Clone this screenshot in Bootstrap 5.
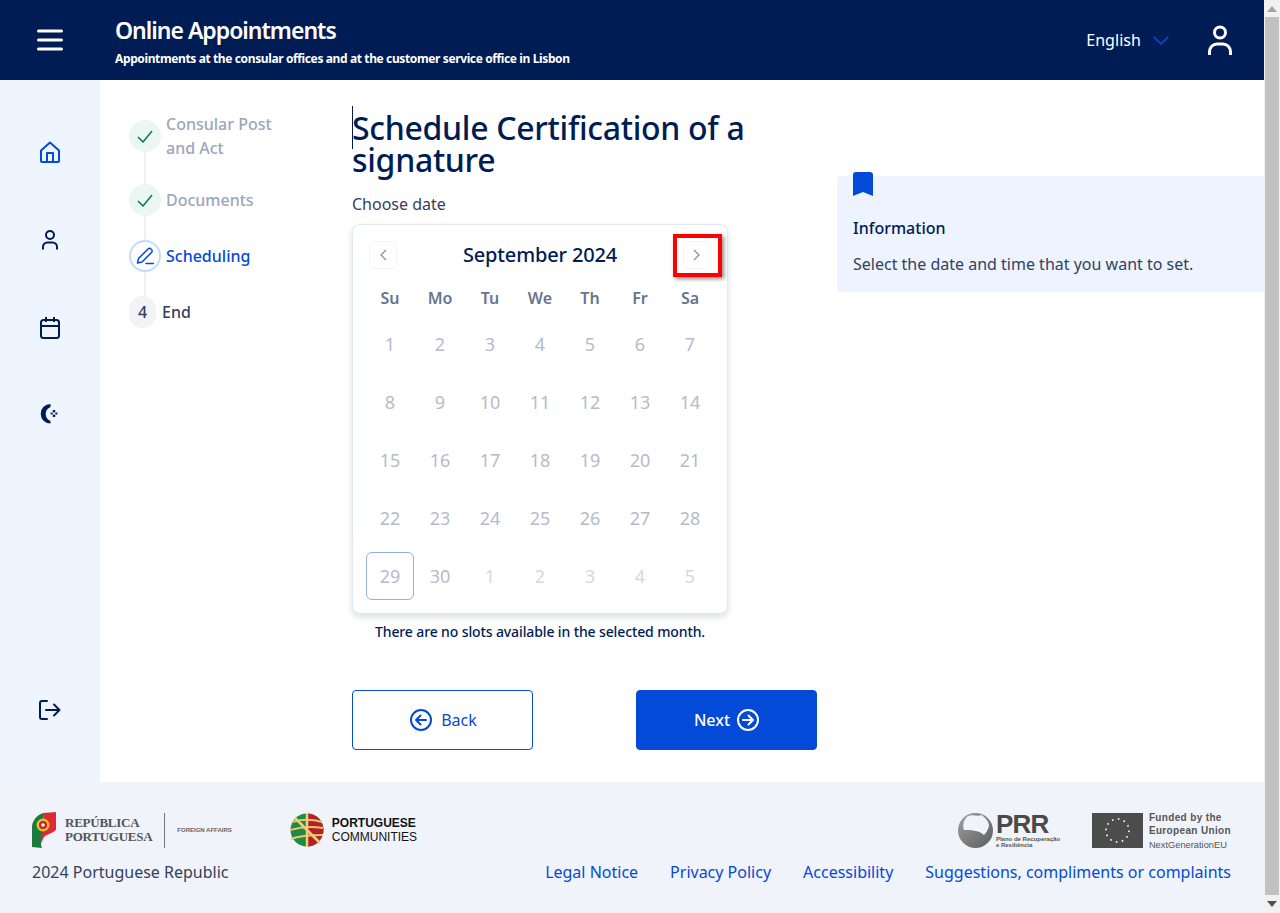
<!DOCTYPE html>
<html lang="en">
<head>
    <meta charset="UTF-8">
    <title>Online Appointments</title>
    <link rel="stylesheet" href="https://cdn.jsdelivr.net/npm/bootstrap@5.3.0/dist/css/bootstrap.min.css">
    <style>
        :root {
            --navy: #001c54;
            --blue: #034ad8;
        }

        html, body { height: 913px; overflow: hidden; }

        body {
            font-family: "Noto Sans", sans-serif;
            font-size: 16px;
            color: #33415c;
            background: #fff;
        }

        .page-col { width: 1264px; height: 913px; }

        /* fake browser scrollbar */
        .scroll-col { width: 16px; height: 913px; background: #f1f1f1; }
        .scroll-btn { height: 17px; }
        .scroll-thumb { margin: 0 1px; height: 878px; background: #c1c1c1; }

        /* header */
        .top-bar { height: 80px; background: var(--navy); color: #fff; }
        .burger { width: 115px; padding-left: 37px; }
        .bar-title { font-size: 23px; line-height: 32px; font-weight: 600; letter-spacing: -1px; }
        .bar-sub { font-size: 12px; line-height: 16px; font-weight: 700; margin-top: 5px; letter-spacing: -0.38px; }
        .lang-text { font-size: 16px; letter-spacing: 0.05px; }
        .lang-arrow { margin-left: 12px; }
        .bar-user { margin-left: 39px; margin-right: 32px; }

        /* body area */
        .mid-area { height: 702px; }
        .side-nav { width: 100px; background: #eff5ff; padding-top: 60px; }
        .side-link { height: 24px; margin-bottom: 64px; flex: none; }
        .side-out { margin-top: 206px; margin-bottom: 0; }

        /* stepper */
        .steps-col { width: 252px; padding-left: 29px; padding-top: 32px; }
        .step-list { position: relative; }
        .step-list::before {
            content: "";
            position: absolute;
            left: 15px;
            top: 8px;
            width: 2px;
            height: 190px;
            background: #eef1f6;
        }
        .step-row { display: flex; align-items: center; margin-bottom: 24px; position: relative; font-weight: 500; line-height: 24px; }
        .step-dot { width: 32px; height: 32px; border-radius: 50%; flex: none; display: flex; align-items: center; justify-content: center; margin-right: 5px; }
        .step-done .step-dot { background: #ebf8f2; }
        .step-done { color: #9ba6bc; }
        .step-now { color: var(--blue); }
        .step-now .step-dot { background: #fff; border: 2px solid #c4dafb; }
        .step-end { color: #33415c; }
        .step-end .step-dot { width: 27px; background: #f1f3f8; border-radius: 14px; font-weight: 500; color: #33415c; font-size: 16px; margin-right: 6px; }

        /* main column */
        .main-col { width: 465px; padding-top: 32px; position: relative; }
        .text-caret { position: absolute; left: 0; top: 26px; width: 1px; height: 43px; background: var(--navy); }
        .page-title { font-size: 32px; line-height: 32px; font-weight: 500; letter-spacing: -0.3px; color: var(--navy); margin: 0; }
        .date-label { margin-top: 16px; line-height: 24px; margin-bottom: 8px; color: #33415c; }

        .cal-box {
            width: 376px;
            height: 390px;
            border: 1px solid #e3e8f0;
            border-radius: 8px;
            box-shadow: 0 3px 6px rgba(40, 50, 80, 0.16);
            padding: 16px 12px 0 12px;
            position: relative;
            background: #fff;
        }
        .cal-head { height: 28px; padding: 0 4px; }
        .cal-nav { width: 28px; height: 28px; border: 1px solid #f4f5f8; border-radius: 5px; background: #fff; display: flex; align-items: center; justify-content: center; padding: 0; }
        .cal-month { font-size: 20px; line-height: 28px; font-weight: 500; letter-spacing: -0.15px; color: var(--navy); }
        .cal-grid { display: grid; grid-template-columns: repeat(7, 50px); }
        .cal-wd { height: 24px; line-height: 24px; margin-top: 17px; margin-bottom: 10px; text-align: center; font-weight: 600; color: #66758f; }
        .cal-day { height: 48px; margin-bottom: 10px; display: flex; align-items: center; justify-content: center; color: #b4bcc9; font-size: 18px; width: 48px; justify-self: center; }
        .cal-day.other { color: #d6d8dc; }
        .cal-day.today { border: 1px solid #8eb0ee; border-radius: 6px; }
        .red-mark {
            position: absolute;
            left: 320px;
            top: 9px;
            width: 49px;
            height: 43px;
            border: 4px solid #f00;
            box-shadow: 2px 2px 4px rgba(0, 0, 0, 0.45);
            pointer-events: none;
        }
        .no-slots { width: 376px; text-align: center; font-size: 14px; line-height: 20px; font-weight: 500; letter-spacing: -0.12px; color: var(--navy); margin-top: 8px; }

        .btn-row { margin-top: 48px; }
        .act-btn { width: 181px; height: 60px; border-radius: 4px; display: flex; align-items: center; justify-content: center; font-size: 16px; }
        .act-back { background: #fff; border: 1px solid var(--blue); color: var(--blue); gap: 9px; padding-left: 8px; }
        .act-next { background: var(--blue); border: 1px solid var(--blue); color: #fff; font-weight: 500; gap: 7px; }

        /* info box */
        .info-col { margin-left: 20px; width: 427px; padding-top: 96px; }
        .info-box { height: 116px; background: #edf4ff; border-radius: 4px 0 0 4px; padding: 0 16px; position: relative; }
        .info-mark { position: absolute; left: 16px; top: -4px; }
        .info-head { padding-top: 40px; line-height: 24px; font-weight: 500; color: var(--navy); }
        .info-text { margin-top: 12px; line-height: 24px; color: #33415c; }

        /* footer */
        .foot-area { height: 131px; background: #f0f3f9; padding: 30px 33px 0 32px; }
        .logo-row { height: 36px; }
        .rep-name { font-family: "Liberation Serif", serif; font-size: 13px; line-height: 14.5px; font-weight: 700; color: #555; letter-spacing: -0.25px; margin-left: 9px; }
        .rep-div { width: 1px; height: 35px; background: #777; margin: 0 12px; }
        .rep-dept { font-family: "Liberation Sans", sans-serif; font-size: 6px; font-weight: 700; color: #666; white-space: nowrap; }
        .comm-logo { margin-left: 58px; }
        .comm-name { font-family: "Liberation Sans", sans-serif; font-size: 12px; line-height: 14px; color: #111; margin-left: 8px; }
        .prr-block { width: 64px; margin: 0 32px 0 3px; }
        .prr-big { font-family: "Liberation Sans", sans-serif; font-size: 26px; line-height: 24px; font-weight: 700; color: #4a4a4a; letter-spacing: -0.8px; }
        .prr-small { font-family: "Liberation Sans", sans-serif; font-size: 6px; line-height: 6.5px; font-weight: 700; color: #555; white-space: nowrap; }
        .eu-text { font-family: "Liberation Sans", sans-serif; font-size: 10px; line-height: 13px; font-weight: 700; color: #555; letter-spacing: 0.35px; margin-left: 6px; padding-top: 4px; white-space: nowrap; }
        .eu-next { font-weight: 400; font-size: 9.3px; letter-spacing: 0; line-height: 16px; }
        .foot-line { margin-top: 12px; line-height: 24px; }
        .foot-links { gap: 32px; }
        .foot-links a { color: var(--blue); text-decoration: none; }
    </style>
</head>
<body>
<div class="d-flex">
    <div class="page-col d-flex flex-column">

        <header class="top-bar d-flex align-items-center">
            <div class="burger d-flex">
                <svg width="26" height="22" viewBox="0 0 26 22" fill="none" stroke="#fff" stroke-width="3" stroke-linecap="round"><path d="M1.500 2h23M1.500 11h23M1.500 20h23"/></svg>
            </div>
            <div class="flex-grow-1">
                <div class="bar-title">Online Appointments</div>
                <div class="bar-sub">Appointments at the consular offices and at the customer service office in Lisbon</div>
            </div>
            <div class="d-flex align-items-center">
                <span class="lang-text">English</span>
                <svg class="lang-arrow" width="16" height="9" viewBox="0 0 16 9" fill="none" stroke="#0a4fd6" stroke-width="1.500"><path d="M.7.7L8 8l7.300-7.300"/></svg>
                <svg class="bar-user" width="24" height="31" viewBox="0 0 24 31" fill="none" stroke="#fff" stroke-width="3"><circle cx="12" cy="7.500" r="5.500"/><path d="M1.500 30v-3.500a7.500 7.500 0 0 1 7.500-7.500h6a7.500 7.500 0 0 1 7.500 7.500V30"/></svg>
            </div>
        </header>

        <div class="mid-area d-flex">
            <nav class="side-nav d-flex flex-column align-items-center">
                <div class="side-link d-flex align-items-center">
                    <svg width="20" height="22" viewBox="0 0 20 22" fill="none" stroke="#034ad8" stroke-width="2" stroke-linejoin="round"><path d="M1 9.500L10 1.500l9 8V20a1 1 0 0 1-1 1H2a1 1 0 0 1-1-1z"/><path d="M7 21v-9h6v9"/></svg>
                </div>
                <div class="side-link d-flex align-items-center">
                    <svg width="16" height="20" viewBox="0 0 16 20" fill="none" stroke="#001c54" stroke-width="2"><circle cx="8" cy="5" r="4"/><path d="M1 19.500v-2.500a4.500 4.500 0 0 1 4.500-4.500h5a4.500 4.500 0 0 1 4.500 4.500v2.500"/></svg>
                </div>
                <div class="side-link d-flex align-items-center">
                    <svg width="20" height="22" viewBox="0 0 20 22" fill="none" stroke="#001c54" stroke-width="2"><rect x="1" y="3" width="18" height="18" rx="2.500"/><path d="M1 9h18M6 0v5M14 0v5"/></svg>
                </div>
                <div class="side-link d-flex align-items-center">
                    <svg width="20" height="24" viewBox="0 0 20 24" fill="#001c54"><path d="M10.500 0A9.800 9.800 0 1 0 10.500 19.600L10.500 17A7.500 7.500 0 0 1 10.500 3z"/><rect x="12.800" y="6" width="2.400" height="2.400"/><rect x="12.800" y="10.600" width="2.400" height="2.400"/><rect x="10.600" y="8.500" width="2" height="2"/><rect x="15.400" y="8.500" width="2" height="2"/></svg>
                </div>
                <div class="side-link side-out d-flex align-items-center">
                    <svg width="22" height="20" viewBox="0 0 22 20" fill="none" stroke="#001c54" stroke-width="2" stroke-linecap="round" stroke-linejoin="round"><path d="M8 1H3a2 2 0 0 0-2 2v14a2 2 0 0 0 2 2h5"/><path d="M7 10h13M15 4.500l5.500 5.500-5.500 5.500"/></svg>
                </div>
            </nav>

            <div class="steps-col">
                <div class="step-list">
                    <div class="step-row step-done">
                        <span class="step-dot"><svg width="16" height="13" viewBox="0 0 16 13" fill="none" stroke="#0b7a4b" stroke-width="1.500"><path d="M1 7l5 5 9-11"/></svg></span>
                        <span>Consular Post<br>and Act</span>
                    </div>
                    <div class="step-row step-done">
                        <span class="step-dot"><svg width="16" height="13" viewBox="0 0 16 13" fill="none" stroke="#0b7a4b" stroke-width="1.500"><path d="M1 7l5 5 9-11"/></svg></span>
                        <span>Documents</span>
                    </div>
                    <div class="step-row step-now">
                        <span class="step-dot"><svg width="18" height="18" viewBox="0 0 18 18" fill="none" stroke="#034ad8" stroke-width="1.500" stroke-linejoin="round"><path d="M1.500 16l1-4.500L12 2a2 2 0 0 1 3 0l.5.500a2 2 0 0 1 0 3L6 15z"/><path d="M10 16.500h7.500" stroke-linecap="round"/></svg></span>
                        <span>Scheduling</span>
                    </div>
                    <div class="step-row step-end">
                        <span class="step-dot">4</span>
                        <span>End</span>
                    </div>
                </div>
            </div>

            <main class="main-col">
                <span class="text-caret"></span>
                <h1 class="page-title">Schedule Certification of a signature</h1>
                <div class="date-label">Choose date</div>

                <div class="cal-box">
                    <div class="cal-head d-flex align-items-center justify-content-between">
                        <button class="cal-nav" type="button"><svg width="7" height="12" viewBox="0 0 7 12" fill="none" stroke="#7b869a" stroke-width="1.100"><path d="M6 1L1 6l5 5"/></svg></button>
                        <span class="cal-month">September 2024</span>
                        <button class="cal-nav" type="button"><svg width="7" height="12" viewBox="0 0 7 12" fill="none" stroke="#7b869a" stroke-width="1.100"><path d="M1 1l5 5-5 5"/></svg></button>
                    </div>
                    <div class="cal-grid" id="cal-grid"></div>
                    <span class="red-mark"></span>
                </div>
                <div class="no-slots">There are no slots available in the selected month.</div>

                <div class="btn-row d-flex justify-content-between">
                    <button class="act-back act-btn" type="button">
                        <svg width="22" height="22" viewBox="0 0 22 22" fill="none" stroke="#034ad8" stroke-width="2" stroke-linecap="round" stroke-linejoin="round"><circle cx="11" cy="11" r="10"/><path d="M16 11H6.500M10.500 6.500L6 11l4.500 4.500"/></svg>
                        <span>Back</span>
                    </button>
                    <button class="act-next act-btn" type="button">
                        <span>Next</span>
                        <svg width="22" height="22" viewBox="0 0 22 22" fill="none" stroke="#fff" stroke-width="2" stroke-linecap="round" stroke-linejoin="round"><circle cx="11" cy="11" r="10"/><path d="M6 11h9.500M11.500 6.500L16 11l-4.500 4.500"/></svg>
                    </button>
                </div>
            </main>

            <aside class="info-col">
                <div class="info-box">
                    <svg class="info-mark" width="20" height="24" viewBox="0 0 20 24"><path d="M0 3a3 3 0 0 1 3-3h14a3 3 0 0 1 3 3v21l-10-4-10 4z" fill="#034ad8"/></svg>
                    <div class="info-head">Information</div>
                    <div class="info-text">Select the date and time that you want to set.</div>
                </div>
            </aside>
        </div>

        <footer class="foot-area">
            <div class="logo-row d-flex align-items-center justify-content-between">
                <div class="d-flex align-items-center">
                    <svg width="24" height="36" viewBox="0 0 24 36">
                        <path d="M11 1C5 3 1 8 0 14v21l10 1c-2-5-1-9 2-13z" fill="#1b7a3e"/>
                        <path d="M11 1L25 0v15c0 4-5 6-10 8-3 1-5 4-5 9-2-5-1-10 2-13z" fill="#dd2a35"/>
                        <circle cx="11" cy="13" r="6.500" fill="#e8bd2c"/>
                        <circle cx="11" cy="13" r="4" fill="#c8202a"/>
                        <circle cx="11" cy="13" r="1.800" fill="#f4f4f4"/>
                    </svg>
                    <div class="rep-name">REPÚBLICA<br>PORTUGUESA</div>
                    <span class="rep-div"></span>
                    <span class="rep-dept">FOREIGN AFFAIRS</span>
                    <div class="comm-logo d-flex align-items-center">
                        <svg width="34" height="34" viewBox="0 0 34 34">
                            <circle cx="17" cy="17" r="16.500" fill="#1d8a45"/>
                            <path d="M17 .5a16.500 16.500 0 0 1 0 33z" fill="#b5202c"/>
                            <path d="M2 9c10-3 20-3 30 0M0 17c10-3 22-4 33-2M1 26c10-4 22-4 32-4" stroke="#e8c766" stroke-width="2" fill="none"/>
                            <path d="M5 5l25 25M17 0v34" stroke="#ecd07a" stroke-width="2.500"/>
                        </svg>
                        <div class="comm-name"><b>PORTUGUESE</b><br>COMMUNITIES</div>
                    </div>
                </div>
                <div class="d-flex align-items-center">
                    <svg width="35" height="35" viewBox="0 0 35 35">
                        <defs><linearGradient id="prr-grad" x1="0" y1="0" x2="1" y2="1"><stop offset="0" stop-color="#a0a0a0"/><stop offset="1" stop-color="#5d5d5d"/></linearGradient></defs>
                        <circle cx="17.500" cy="17.500" r="17.500" fill="url(#prr-grad)"/>
                        <path d="M10 3c5-2 9 1 14-1 3 3 7 6 7 11-1 4-3 7-5 9-6-5-13-5-20-5-2-5 0-11 4-14z" fill="#f0f3f9"/>
                    </svg>
                    <div class="prr-block">
                        <div class="prr-big">PRR</div>
                        <div class="prr-small">Plano de Recuperação<br>e Resiliência</div>
                    </div>
                    <svg width="51" height="35" viewBox="0 0 51 35"><rect width="51" height="35" fill="#4c4c4c"/><circle cx="25.500" cy="17.500" r="11.500" fill="none" stroke="#fff" stroke-width="1.600" stroke-dasharray="1.600 4.420"/></svg>
                    <div class="eu-text">Funded by the<br>European Union<br><span class="eu-next">NextGenerationEU</span></div>
                </div>
            </div>
            <div class="foot-line d-flex justify-content-between">
                <span>2024 Portuguese Republic</span>
                <div class="foot-links d-flex">
                    <a href="#">Legal Notice</a>
                    <a href="#">Privacy Policy</a>
                    <a href="#">Accessibility</a>
                    <a href="#">Suggestions, compliments or complaints</a>
                </div>
            </div>
        </footer>
    </div>

    <div class="scroll-col">
        <div class="scroll-btn d-flex align-items-center justify-content-center">
            <svg width="10" height="6" viewBox="0 0 10 6"><path d="M0 6L5 0l5 6z" fill="#a3a3a3"/></svg>
        </div>
        <div class="scroll-thumb"></div>
        <div class="scroll-btn d-flex align-items-center justify-content-center">
            <svg width="10" height="6" viewBox="0 0 10 6"><path d="M0 0l5 6 5-6z" fill="#505050"/></svg>
        </div>
    </div>
</div>

<script>
    let grid = document.getElementById('cal-grid');
    ['Su', 'Mo', 'Tu', 'We', 'Th', 'Fr', 'Sa'].forEach(name => {
        grid.innerHTML += `<div class="cal-wd">${name}</div>`;
    });
    for (let d = 1; d <= 30; d++) {
        grid.innerHTML += `<div class="cal-day${d === 29 ? ' today' : ''}">${d}</div>`;
    }
    for (let d = 1; d <= 5; d++) {
        grid.innerHTML += `<div class="cal-day other">${d}</div>`;
    }
</script>
<script src="https://cdn.jsdelivr.net/npm/bootstrap@5.3.0/dist/js/bootstrap.bundle.min.js"></script>
</body>
</html>
